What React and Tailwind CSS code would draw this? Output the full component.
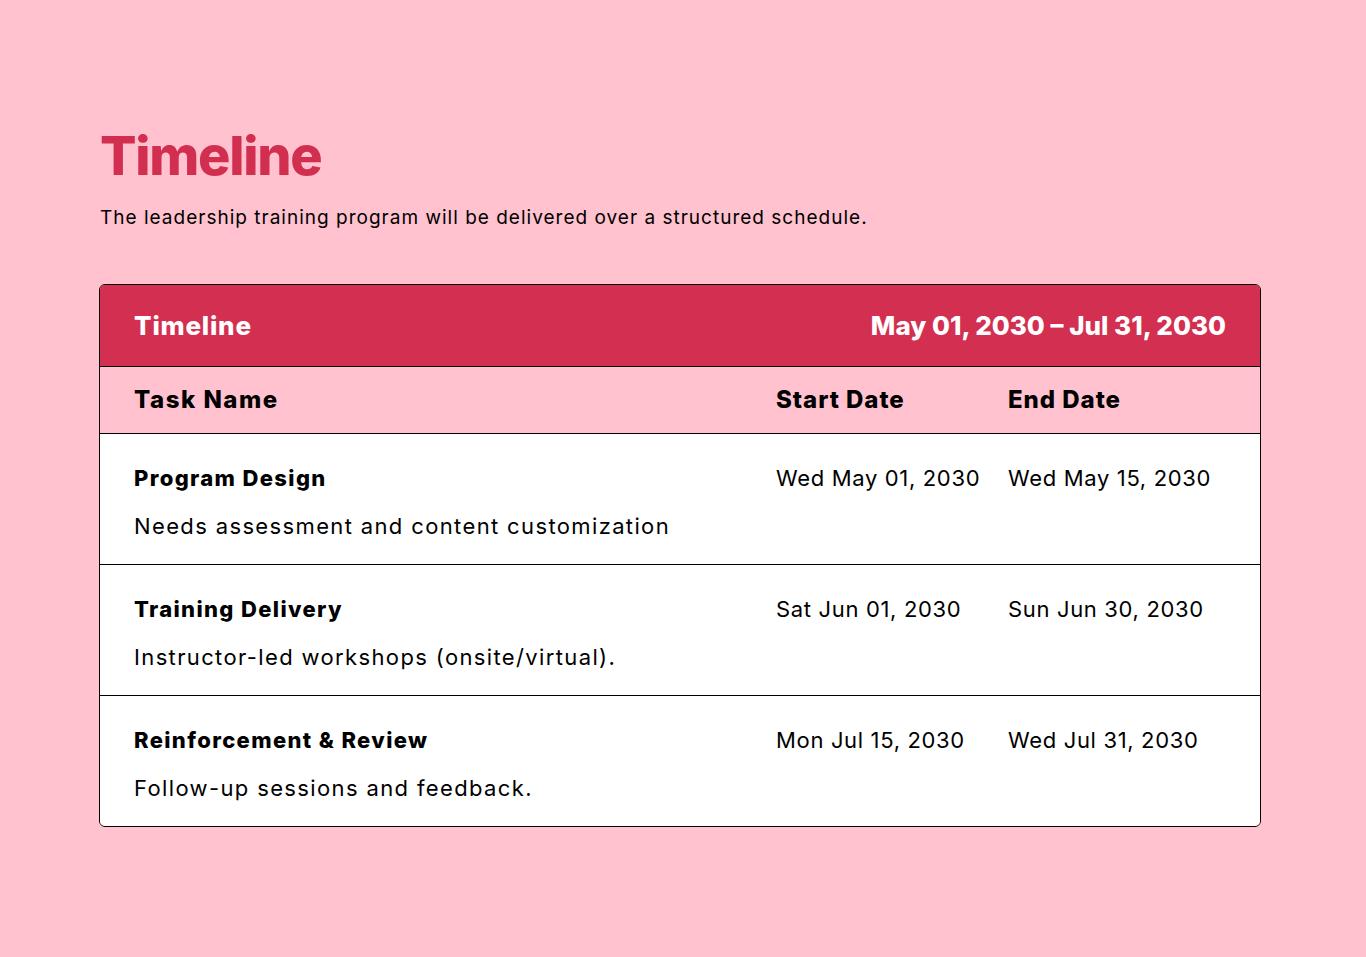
export default function App() {
  const rows = [
    { name: "Program Design", desc: "Needs assessment and content customization", start: "Wed May 01, 2030", end: "Wed May 15, 2030" },
    { name: "Training Delivery", desc: "Instructor-led workshops (onsite/virtual).", start: "Sat Jun 01, 2030", end: "Sun Jun 30, 2030" },
    { name: "Reinforcement & Review", desc: "Follow-up sessions and feedback.", start: "Mon Jul 15, 2030", end: "Wed Jul 31, 2030" },
  ];
  return (
    <div className="min-h-[957px] w-full bg-[#ffc2ce] text-black" style={{ fontFamily: "Inter, 'Noto Sans', sans-serif" }}>
      <div className="px-[100px] pt-[124px]">
        <h1 className="text-[54px] leading-[64px] font-extrabold text-[#d22f50] tracking-[-1.3px]">Timeline</h1>
        <p className="mt-[16px] text-[19px] leading-[28px] tracking-[0.053em] text-black">The leadership training program will be delivered over a structured schedule.</p>
        <div className="mt-[52px] w-[1162px] -ml-[1px] rounded-[6px] border border-black overflow-hidden">
          <div className="flex items-center justify-between bg-[#d32f50] h-[82px] px-[34px] border-b border-black text-white font-extrabold text-[26px]">
            <span className="tracking-[0.03em]">Timeline</span>
            <span className="tracking-[0em]">May 01, 2030 – Jul 31, 2030</span>
          </div>
          <div className="grid grid-cols-[642px_232px_1fr] items-center h-[67px] px-[34px] border-b border-black bg-[#ffc2ce] font-extrabold text-[24px]">
            <span className="tracking-[0.063em]">Task Name</span>
            <span className="tracking-[0.04em]">Start Date</span>
            <span className="tracking-[0.04em]">End Date</span>
          </div>
          {rows.map((r, i) => (
            <div key={i} className={`grid grid-cols-[642px_232px_1fr] bg-white px-[34px] pt-[28px] pb-[21px] text-[22px] leading-[33px] ${i < rows.length - 1 ? "border-b border-black" : ""}`}>
              <div>
                <div className="font-extrabold tracking-[0.062em]">{r.name}</div>
                <div className="mt-[15px] tracking-[0.062em]">{r.desc}</div>
              </div>
              <div className="tracking-[0.03em]">{r.start}</div>
              <div className="tracking-[0.03em]">{r.end}</div>
            </div>
          ))}
        </div>
      </div>
    </div>
  );
}
